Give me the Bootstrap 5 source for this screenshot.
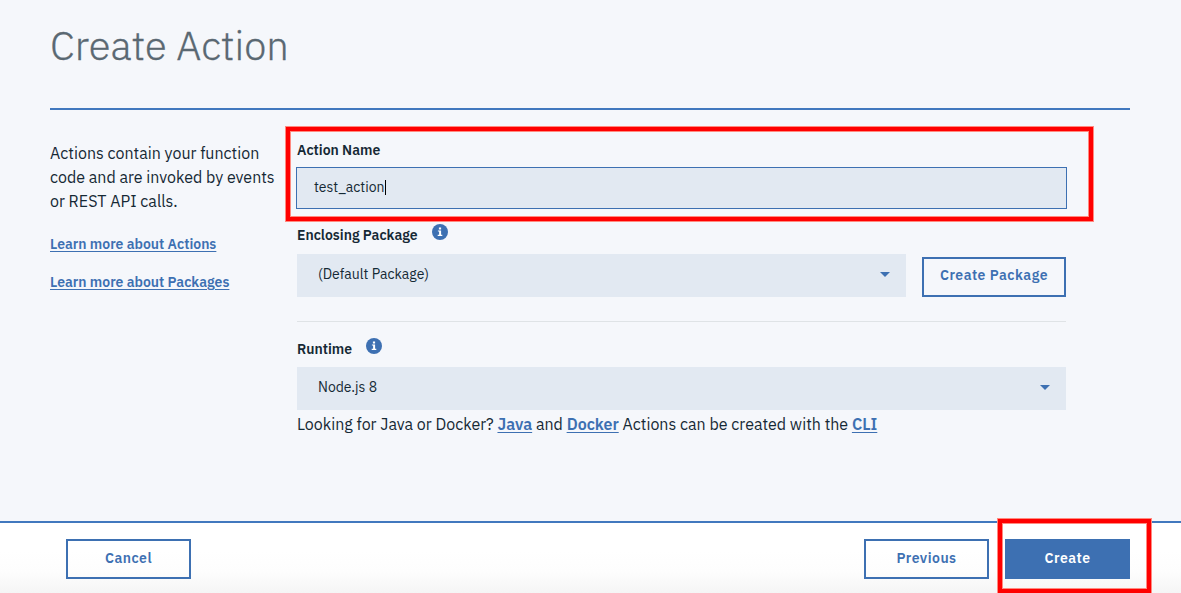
<!DOCTYPE html>
<html lang="en">
<head>
<meta charset="utf-8">
<meta name="viewport" content="width=device-width, initial-scale=1">
<title>Create Action</title>
<link href="https://cdn.jsdelivr.net/npm/bootstrap@5.3.0/dist/css/bootstrap.min.css" rel="stylesheet">
<style>
  :root { --blue: #3d70b2; --ink: #152935; --field: #e2e9f2; }
  body { font-family: "IBM Plex Sans", Roboto, sans-serif; font-size: 16px; line-height: 24px; color: var(--ink); background: #f5f7fb; height: 593px; }
  a { color: var(--blue); font-weight: 600; text-decoration: underline; text-decoration-thickness: 1px; text-underline-offset: 2px; }
  .page-area { height: 521px; padding: 0 51px 0 50px; }
  .page-head { height: 110px; border-bottom: 2px solid #4178be; padding-top: 20px; }
  .page-head h1 { font-size: 40px; line-height: 50px; font-weight: 300; color: #5a6872; -webkit-text-stroke: .3px #5a6872; }
  .intro { width: 247px; padding-top: 31px; }
  .intro a { display: block; font-size: 14px; line-height: 18px; }
  .form-area { width: 769px; padding-top: 30px; }
  .field-label { font-size: 14px; font-weight: 600; line-height: 20px; }
  .name-field.form-control { width: 771px; height: 42px; margin: 7px 0 0 -1px; padding: 0 17px 2px; font-size: 14px; color: var(--ink); background: var(--field); border: 1px solid var(--blue); }
  .caret-bar { width: 1px; height: 15px; background: #000; }
  .picker { height: 43px; padding: 0 16px 3px 21px; font-size: 14px; background: var(--field); }
  .picker svg { margin-top: 1px; }
  .btn-line, .btn-solid { height: 40px; padding: 0 0 4px; font-size: 14px; line-height: 20px; font-weight: 600; letter-spacing: .5px; border: 2px solid var(--blue); }
  .btn-line { color: var(--blue); }
  .btn-solid { color: #fff; background: var(--blue); }
  .btn-pkg { width: 144px; margin-top: 3px; }
  .btn-nav { width: 125px; padding-bottom: 2px; }
  .divider { height: 1px; margin: 24px 0 17px; background: #dfe3e6; }
  .foot-bar { height: 72px; padding: 16px 51px 0 66px; border-top: 2px solid #4178be; background: linear-gradient(#fff 40%, #fdfdfd 70%, #f5f5f5); }
  .callout { border: 4px solid #f00; box-shadow: 0 0 0 1px #ff8a80, inset 0 0 0 1px #ff8a80; pointer-events: none; }
  .callout-name { left: -11px; top: -13px; width: 807px; height: 94px; }
  .callout-create { left: -7px; top: -20px; width: 153px; height: 74px; }
</style>
</head>
<body class="overflow-hidden">
  <main class="page-area">
    <header class="page-head"><h1 class="m-0">Create Action</h1></header>
    <div class="d-flex">
      <aside class="intro flex-shrink-0">
        <p class="m-0">Actions contain your function<br>code and are invoked by events<br>or REST API calls.</p>
        <a href="#" style="margin-top:22px">Learn more about Actions</a>
        <a href="#" style="margin-top:20px">Learn more about Packages</a>
      </aside>
      <form class="form-area">
        <div class="position-relative">
          <div class="field-label">Action Name</div>
          <div class="name-field form-control rounded-0 d-flex align-items-center"><span>test_action</span><span class="caret-bar"></span></div>
          <div class="callout callout-name position-absolute"></div>
        </div>
        <div class="d-flex" style="margin-top:16px">
          <span class="field-label">Enclosing Package</span>
          <svg style="margin:-1px 0 0 14px" width="16" height="16" viewBox="0 0 16 16"><circle cx="8" cy="8" r="8" fill="#3d70b2"/><path fill="#fff" d="M6.9 3.4h2.2v2H6.9zM5.9 6.4h3.2v4.4h1.2V12H5.7v-1.2h1.4V7.6H5.9z"/></svg>
        </div>
        <div class="d-flex gap-3" style="margin-top:9px">
          <div class="picker flex-grow-1 d-flex align-items-center justify-content-between"><span>(Default Package)</span><svg width="10" height="5" viewBox="0 0 10 5"><path d="M0 0h10L5 5z" fill="#3d70b2"/></svg></div>
          <button type="button" class="btn btn-line btn-pkg rounded-0">Create Package</button>
        </div>
        <div class="divider"></div>
        <div class="d-flex">
          <span class="field-label">Runtime</span>
          <svg style="margin:-1px 0 0 14px" width="16" height="16" viewBox="0 0 16 16"><circle cx="8" cy="8" r="8" fill="#3d70b2"/><path fill="#fff" d="M6.9 3.4h2.2v2H6.9zM5.9 6.4h3.2v4.4h1.2V12H5.7v-1.2h1.4V7.6H5.9z"/></svg>
        </div>
        <div class="picker d-flex align-items-center justify-content-between" style="margin-top:8px"><span>Node.js 8</span><svg width="10" height="5" viewBox="0 0 10 5"><path d="M0 0h10L5 5z" fill="#3d70b2"/></svg></div>
        <p class="m-0" style="padding-top:2px">Looking for Java or Docker? <a href="#">Java</a> and <a href="#">Docker</a> Actions can be created with the <a href="#">CLI</a></p>
      </form>
    </div>
  </main>
  <footer class="foot-bar d-flex justify-content-between">
    <button type="button" class="btn btn-line btn-nav rounded-0">Cancel</button>
    <div class="d-flex gap-3">
      <button type="button" class="btn btn-line btn-nav rounded-0">Previous</button>
      <div class="position-relative">
        <button type="button" class="btn btn-solid btn-nav rounded-0">Create</button>
        <div class="callout callout-create position-absolute"></div>
      </div>
    </div>
  </footer>
<script src="https://cdn.jsdelivr.net/npm/bootstrap@5.3.0/dist/js/bootstrap.bundle.min.js"></script>
</body>
</html>
